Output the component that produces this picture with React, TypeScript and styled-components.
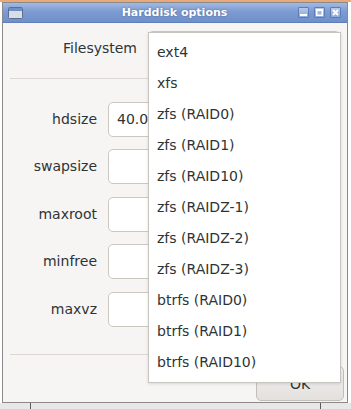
import React from 'react';
import styled, { createGlobalStyle } from 'styled-components';

const GlobalStyle = createGlobalStyle`
  html, body {
    margin: 0;
    padding: 0;
    background: #ffffff;
  }
  * {
    box-sizing: border-box;
  }
`;

const Desktop = styled.div`
  width: 351px;
  height: 409px;
  overflow: hidden;
  display: flex;
  flex-direction: column;
  background: linear-gradient(#e9a97a 0 2px, #ffffff 2px);
  font-family: 'DejaVu Sans', 'Liberation Sans', sans-serif;
`;

const Window = styled.div`
  position: relative;
  margin: 2px 0 0 2px;
  width: 346px;
  height: 401px;
  border: 1px solid #8a8a8a;
  background: #f6f5f4;
  display: flex;
  flex-direction: column;
`;

const TitleBar = styled.div`
  height: 20px;
  display: flex;
  align-items: center;
  padding: 0 6px 0 5px;
  background: linear-gradient(#a2b9e2, #7c9bd2 45%, #7090ca);
  border-bottom: 1px solid #5f7fb8;
`;

const WindowIcon = styled.svg`
  flex: none;
  width: 15px;
  height: 12px;
`;

const Title = styled.div`
  flex: 1;
  text-align: center;
  color: #ffffff;
  font-size: 11px;
  font-weight: bold;
  text-shadow: 0 0 2px rgba(40, 60, 110, 0.6);
  padding-left: 28px;
`;

const TitleButtons = styled.div`
  display: flex;
  gap: 5px;
`;

const TitleButton = styled.div`
  width: 11px;
  height: 11px;
  border: 1px solid #5d7db6;
  border-radius: 1px;
  background: linear-gradient(#b5c8ea, #8ea9da);
  display: flex;
  align-items: center;
  justify-content: center;
`;

const Body = styled.div`
  flex: 1;
  display: flex;
  flex-direction: column;
`;

const TopSection = styled.div`
  height: 55px;
  display: flex;
  justify-content: flex-end;
  align-items: flex-start;
  gap: 11px;
  padding: 8px 7px 0 0;
`;

const Label = styled.div`
  color: #2e3436;
  font-size: 14px;
  line-height: 35px;
  text-align: right;
`;

const Combo = styled.div`
  width: 192px;
  height: 35px;
  border: 1px solid #cdc7c2;
  border-radius: 5px;
  background: linear-gradient(#f4f3f2, #e8e6e4);
`;

const Separator = styled.div`
  height: 1px;
  margin: 0 7px;
  background: #dcd8d4;
`;

const FormGrid = styled.div`
  height: 275px;
  display: grid;
  grid-template-columns: 94px 1fr;
  grid-auto-rows: 35px;
  column-gap: 11px;
  row-gap: 12.5px;
  padding: 22.5px 7px 0 0;
`;

const Field = styled.div`
  height: 35px;
  border: 1px solid #cdc7c2;
  border-radius: 5px;
  background: #ffffff;
  color: #2e3436;
  font-size: 14px;
  line-height: 33px;
  padding-left: 8px;
`;

const ButtonRow = styled.div`
  flex: 1;
  display: flex;
  justify-content: flex-end;
  align-items: flex-start;
  padding: 11px 3px 0 0;
`;

const Button = styled.div`
  width: 88px;
  height: 35px;
  border: 1px solid #c3beb8;
  border-radius: 5px;
  background: linear-gradient(#f3f2f1, #e3e0dd);
  color: #2e3436;
  font-size: 14px;
  display: flex;
  align-items: center;
  justify-content: center;
`;

const Popup = styled.div`
  position: absolute;
  left: 145px;
  top: 29px;
  width: 193px;
  height: 351px;
  padding: 4px 0;
  background: #ffffff;
  border: 1px solid #c8c4bf;
  box-shadow: 0 1px 3px rgba(0, 0, 0, 0.12);
`;

const PopupItem = styled.div`
  height: 31px;
  line-height: 31px;
  padding-left: 8px;
  color: #2e3436;
  font-size: 14px;
  white-space: nowrap;
`;

const BottomStrip = styled.div`
  flex: 1;
  display: flex;
  background: #e8e8e8;
`;

const StripSegment = styled.div<{ $width: number }>`
  flex: none;
  width: ${p => p.$width}px;
  border-left: 1px solid #5a5a5a;
  &:first-child {
    border-left: none;
  }
`;

const fields = [
  { label: 'hdsize', value: '40.0' },
  { label: 'swapsize', value: '' },
  { label: 'maxroot', value: '' },
  { label: 'minfree', value: '' },
  { label: 'maxvz', value: '' },
];

const filesystems = [
  'ext4',
  'xfs',
  'zfs (RAID0)',
  'zfs (RAID1)',
  'zfs (RAID10)',
  'zfs (RAIDZ-1)',
  'zfs (RAIDZ-2)',
  'zfs (RAIDZ-3)',
  'btrfs (RAID0)',
  'btrfs (RAID1)',
  'btrfs (RAID10)',
];

export default function App() {
  return (
    <>
      <GlobalStyle />
      <Desktop>
        <Window>
          <TitleBar>
            <WindowIcon viewBox="0 0 15 12">
              <rect x="0.5" y="0.5" width="14" height="11" rx="1" fill="#d9dde4" stroke="#5c6f92" />
              <rect x="1" y="1" width="13" height="3" fill="#6f8fc6" />
            </WindowIcon>
            <Title>Harddisk options</Title>
            <TitleButtons>
              <TitleButton>
                <svg width="7" height="7" viewBox="0 0 7 7">
                  <rect x="0" y="5" width="7" height="2" fill="#ffffff" />
                </svg>
              </TitleButton>
              <TitleButton>
                <svg width="7" height="7" viewBox="0 0 7 7">
                  <rect x="0.75" y="0.75" width="5.5" height="5.5" fill="none" stroke="#ffffff" strokeWidth="1.5" />
                  <rect x="0" y="0" width="7" height="2" fill="#ffffff" />
                </svg>
              </TitleButton>
              <TitleButton>
                <svg width="7" height="7" viewBox="0 0 7 7">
                  <path d="M1 1 L6 6 M6 1 L1 6" stroke="#ffffff" strokeWidth="1.8" />
                </svg>
              </TitleButton>
            </TitleButtons>
          </TitleBar>
          <Body>
            <TopSection>
              <Label>Filesystem</Label>
              <Combo />
            </TopSection>
            <Separator />
            <FormGrid>
              {fields.map(f => (
                <React.Fragment key={f.label}>
                  <Label>{f.label}</Label>
                  <Field>{f.value}</Field>
                </React.Fragment>
              ))}
            </FormGrid>
            <Separator />
            <ButtonRow>
              <Button>OK</Button>
            </ButtonRow>
          </Body>
          <Popup>
            {filesystems.map(fs => (
              <PopupItem key={fs}>{fs}</PopupItem>
            ))}
          </Popup>
        </Window>
        <BottomStrip>
          <StripSegment $width={30} />
          <StripSegment $width={290} />
          <StripSegment $width={31} />
        </BottomStrip>
      </Desktop>
    </>
  );
}
